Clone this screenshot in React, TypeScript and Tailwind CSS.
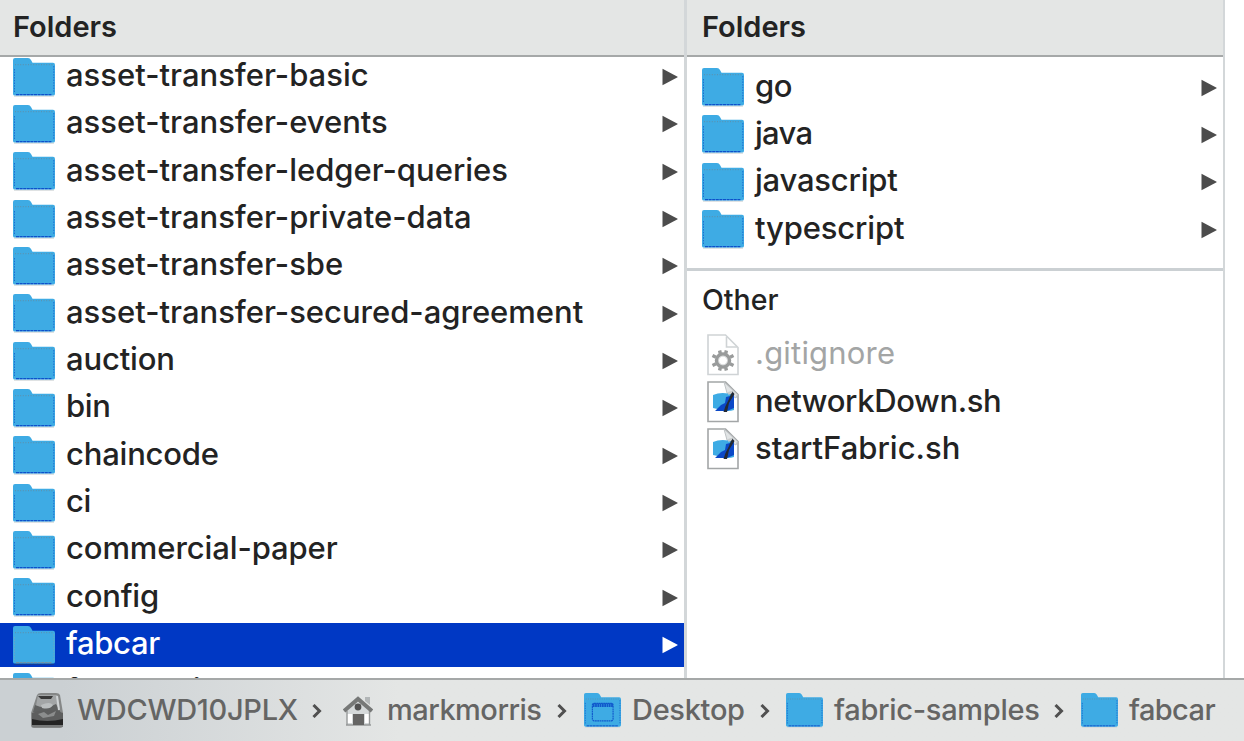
import type { ReactNode } from "react";

const LEFT = [
  { name: "asset-transfer-basic", tracking: "" },
  { name: "asset-transfer-events", tracking: "" },
  { name: "asset-transfer-ledger-queries", tracking: "" },
  { name: "asset-transfer-private-data", tracking: "" },
  { name: "asset-transfer-sbe", tracking: "" },
  { name: "asset-transfer-secured-agreement", tracking: "" },
  { name: "auction", tracking: "tracking-[-0.15px]" },
  { name: "bin", tracking: "tracking-[-0.3px]" },
  { name: "chaincode", tracking: "tracking-[-0.2px]" },
  { name: "ci", tracking: "tracking-[-0.3px]" },
  { name: "commercial-paper", tracking: "tracking-[-0.1px]" },
  { name: "config", tracking: "tracking-[-0.2px]" },
  { name: "fabcar", tracking: "tracking-[-0.3px]" },
  { name: "fabcar-ci", tracking: "" },
];

const RIGHT = [
  { name: "go", tracking: "tracking-[-0.4px]" },
  { name: "java", tracking: "tracking-[-0.7px]" },
  { name: "javascript", tracking: "tracking-[-0.2px]" },
  { name: "typescript", tracking: "tracking-[-0.15px]" },
];

function Folder({ className, selected, desktop }: { className: string; selected?: boolean; desktop?: boolean }) {
  return (
    <svg viewBox="0 0 42 39" preserveAspectRatio="none" className={`block shrink-0 ${className}`}>
      <path d="M1 37.5h40v1.2H1z" fill={selected ? "#1b3d86" : "#d4d8da"} />
      <path d="M0 2Q0 0 2 0H15Q17 0 18 2L19.5 4.7H40Q42 4.7 42 7V36Q42 37.5 40 37.5H2Q0 37.5 0 36Z" fill="#3eabe4" />
      <path d="M2 6.7H40" stroke="#648ba0" strokeWidth=".9" strokeDasharray="1 1.6" />
      <path d="M1.5 11V34M40.8 8V35" stroke={selected ? "#6fa4c0" : "#1765cf"} strokeWidth=".9" strokeDasharray="1.5 1.2" />
      <path d="M3 36.6H39" stroke={selected ? "#7093a5" : "#0d50ca"} strokeWidth="1.1" strokeDasharray="3 .6" />
      {desktop && (
        <g fill="none" stroke="#1058cc" strokeWidth="1.3" strokeDasharray="2 .6">
          <rect x="9.5" y="11.5" width="23.5" height="19.5" rx="2" />
          <path d="M10 13.5H33" strokeWidth="4" />
        </g>
      )}
    </svg>
  );
}

function Arrow({ selected }: { selected?: boolean }) {
  return (
    <svg viewBox="0 0 16 18" className="block h-[18px] w-4 shrink-0">
      <path d="M.5 .8 15.6 8.7v.6L.5 17.2z" fill={selected ? "#ffffff" : "#4c4c4c"} />
    </svg>
  );
}

function PageIcon({ kind }: { kind: "gear" | "script" }) {
  const edge = kind === "gear" ? "#cfd3d5" : "#a3a6a7";
  return (
    <svg viewBox="0 0 32 42" className="block h-[42px] w-8 shrink-0">
      <path d="M1 1H18.5L31 13.5V40.5H1z" fill="#fff" stroke={edge} strokeWidth="1.6" />
      {kind === "gear" ? (
        <>
          <path d="M19.5 3V13H30" fill="none" stroke="#cfd3d5" strokeWidth="1.6" />
          <g transform="translate(16 26.5)">
            <circle r="6.5" fill="none" stroke="#999b9b" strokeWidth="3.5" />
            <g stroke="#999b9b" strokeWidth="3.4">
              <path d="M-3.4-10-2.7-7M3.4-10 2.7-7M-3.4 10-2.7 7M3.4 10 2.7 7M-10.5-5-7-3.3M10.5-5 7-3.3M-10.5 5-7 3.3M10.5 5 7 3.3" />
            </g>
            <circle r="4.5" fill="#fff" stroke="#bfc2c3" strokeWidth=".8" />
          </g>
        </>
      ) : (
        <>
          <path d="M17 1 20 12 29 17 30.5 13.5z" fill="#e1e4e5" stroke="#bfc3c5" />
          <path d="M6 14Q15 10 27 14V29Q21 31 15 29L6 27z" fill="#3eabe4" />
          <path d="M19 16 27 14V27L20 30H8L14 24 18 22z" fill="#0b48c7" />
          <path d="M25 10 27.5 13 22 22 20 31 16.5 31 18.5 25 22 18z" fill="#242933" />
          <path d="M21 11 26 9.5 25 12 21.5 14z" fill="#c9cccd" />
        </>
      )}
    </svg>
  );
}

function Disk() {
  return (
    <svg viewBox="0 0 33 36" className="block h-9 w-[33px] shrink-0">
      <path d="M6 2Q7 0 10 0H25Q28 0 29 2L32 20V32Q32 35 29 35H3Q0 35 0 32V20z" fill="#858787" />
      <path d="M7 2H26L28 18H4z" fill="#a2a5a6" />
      <path d="M7 3H22L20 6H10z" fill="#393939" />
      <path d="M4 12Q15 17 25 11L30 20 17 24 2 19z" fill="#5f6161" />
      <path d="M10 12Q19 8 22 12 19 17 11 15z" fill="#babebf" />
      <path d="M1 20Q16 14 32 20V28H1z" fill="#5d5e5e" />
      <path d="M7 21 13 19 17 22 25 18 23 23 12 25z" fill="#8b8d8d" />
      <path d="M1 26Q16 30 32 26V32H1z" fill="#242424" />
      <path d="M26 3 28 17" stroke="#d0d4d6" strokeWidth="2" />
      <path d="M1 33H32" stroke="#777979" strokeWidth="2" />
    </svg>
  );
}

function House() {
  return (
    <svg viewBox="0 0 30 30" className="block h-[30px] w-[30px] shrink-0">
      <path d="M22 1H27V9L22 5z" fill="#b2b6b7" />
      <path d="M4 14 15 5 26 14V29H4z" fill="#d5d9da" />
      <path d="M4 18H9V27H4zM22 18H27V27H22z" fill="#fff" />
      <path d="M4 28.5V15M26.5 28.5V15M3 29H28" stroke="#969999" strokeWidth="1.4" />
      <path d="M1 15 15 3 29 15" fill="none" stroke="#767877" strokeWidth="4" />
      <path d="M10 18H21V29H10z" fill="#656564" />
      <circle cx="15" cy="11" r="3.4" fill="#515151" />
    </svg>
  );
}

function Chevron() {
  return (
    <svg viewBox="0 0 10 14" className="block h-3.5 w-2.5 shrink-0">
      <path d="M1.5 1 7.5 7 1.5 13" fill="none" stroke="#505050" strokeWidth="3" />
    </svg>
  );
}

function Crumb({ icon, name, width, last }: { icon: ReactNode; name: string; width: string; last?: boolean }) {
  return (
    <div className="flex shrink-0 items-center">
      {icon}
      <span className={`-mt-[2px] block shrink-0 whitespace-nowrap text-[29px] leading-[34px] ${width}`}>{name}</span>
      {!last && <Chevron />}
    </div>
  );
}

function Header({ inset }: { inset: string }) {
  return (
    <div className={`relative z-10 h-[57px] shrink-0 border-b-2 border-[#a5a8a8] bg-[#e4e6e5] pt-[9px] text-[29px] font-semibold leading-[36px] ${inset}`}>
      Folders
    </div>
  );
}

function FolderRow({ name, tracking, selected, inset }: { name: string; tracking: string; selected?: boolean; inset: string }) {
  return (
    <div className={`h-[47.33px] shrink-0 pb-[1px] pt-[2px] ${selected ? "text-white" : ""}`}>
      <div className={`flex h-full items-center pr-[6px] ${inset} ${selected ? "bg-[#0038c4]" : ""}`}>
        <Folder className="h-[39px] w-[42px]" selected={selected} />
        <span className={`-mt-[4px] ml-[11px] grow whitespace-nowrap text-[31px] leading-[40px] ${tracking}`}>{name}</span>
        <Arrow selected={selected} />
      </div>
    </div>
  );
}

export default function App() {
  return (
    <div className="flex h-[741px] w-[1244px] flex-col overflow-hidden bg-white font-['Inter',sans-serif] font-medium text-[#232323]">
      <div className="flex h-[678px] shrink-0">
        <section className="flex w-[684px] shrink-0 flex-col overflow-hidden">
          <Header inset="pl-[13px]" />
          <div className="-mt-[4px] flex flex-col">
            {LEFT.map((entry) => (
              <FolderRow key={entry.name} {...entry} selected={entry.name === "fabcar"} inset="pl-[13px]" />
            ))}
          </div>
        </section>
        <div className="w-[3px] shrink-0 bg-[#d3d7d9]" />
        <section className="flex w-[536px] shrink-0 flex-col">
          <Header inset="pl-[15px]" />
          <div className="flex h-[211px] shrink-0 flex-col pt-[6.5px]">
            {RIGHT.map((entry) => (
              <FolderRow key={entry.name} {...entry} inset="pl-[15px]" />
            ))}
          </div>
          <div className="h-[3px] shrink-0 bg-[#cbd0d3]" />
          <div className="h-[60px] shrink-0 pl-[15px] pt-[11px] text-[28.5px] leading-[36px]">Other</div>
          <div className="flex h-[47.33px] items-center pl-[20px] text-[#a3a5a5]">
            <PageIcon kind="gear" />
            <span className="-mt-[2px] ml-[16px] text-[31px] font-normal tracking-[0.2px]">.gitignore</span>
          </div>
          <div className="flex h-[47.33px] items-center pl-[20px]">
            <PageIcon kind="script" />
            <span className="-mt-[2px] ml-[16px] text-[31px] tracking-[-0.35px]">networkDown.sh</span>
          </div>
          <div className="flex h-[47.33px] items-center pl-[20px]">
            <PageIcon kind="script" />
            <span className="-mt-[2px] ml-[16px] text-[31px]">startFabric.sh</span>
          </div>
        </section>
        <div className="w-[2px] shrink-0 bg-[#d3d7d9]" />
      </div>
      <footer className="flex h-[63px] shrink-0 items-center border-t-2 border-[#a5a8a8] bg-linear-to-r from-[#cbd0d3] from-5% to-[#e4e6e5] to-32% pl-[31px] text-[#656564]">
        <Crumb icon={<Disk />} name="WDCWD10JPLX" width="ml-[13px] w-[235px] tracking-[-0.3px]" />
        <div className="w-[21px] shrink-0" />
        <Crumb icon={<House />} name="markmorris" width="ml-[14px] w-[170px] tracking-[-0.5px]" />
        <div className="w-[17px] shrink-0" />
        <Crumb icon={<Folder className="h-[35px] w-[37px]" desktop />} name="Desktop" width="ml-[11px] w-[128px] tracking-[-0.3px]" />
        <div className="w-[16px] shrink-0" />
        <Crumb icon={<Folder className="h-[35px] w-[37px]" />} name="fabric-samples" width="ml-[11px] w-[220px] tracking-[-0.3px]" />
        <div className="w-[17px] shrink-0" />
        <Crumb icon={<Folder className="h-[35px] w-[37px]" />} name="fabcar" width="ml-[11px] w-[100px] tracking-[-0.6px]" last />
      </footer>
    </div>
  );
}
